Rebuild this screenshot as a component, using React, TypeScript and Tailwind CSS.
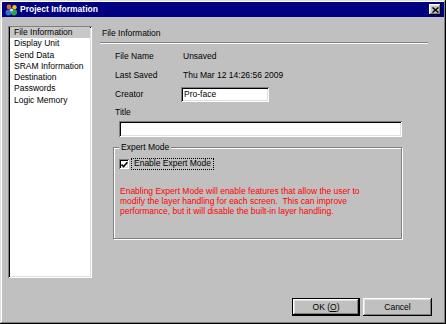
import React from "react";

const raised =
  "shadow-[inset_-1px_-1px_#000,inset_1px_1px_#fff,inset_-2px_-2px_#808080,inset_2px_2px_#dfdfdf]";
const sunken =
  "shadow-[inset_1px_1px_#808080,inset_-1px_-1px_#fff,inset_2px_2px_#000,inset_-2px_-2px_#dfdfdf]";

function AppIcon() {
  return (
    <svg width="13" height="12" viewBox="0 0 13 12">
      <circle cx="4" cy="3" r="2.4" fill="#e8641e" />
      <circle cx="9.5" cy="3.2" r="2.2" fill="#f4c020" />
      <circle cx="3.5" cy="8.5" r="3" fill="#2f6fd8" />
      <circle cx="9" cy="8.3" r="3.1" fill="#2aa845" />
      <circle cx="6.5" cy="6" r="1.6" fill="#c8e8ff" />
    </svg>
  );
}

export default function App() {
  const items = [
    "File Information",
    "Display Unit",
    "Send Data",
    "SRAM Information",
    "Destination",
    "Passwords",
    "Logic Memory",
  ];
  return (
    <div
      className={`w-[446px] h-[324px] bg-[#c0c0c0] p-[2px] flex flex-col text-[8.5px] leading-[11px] text-black font-['Liberation_Sans',Arial,sans-serif] shadow-[inset_-1px_-1px_#000,inset_1px_1px_#dfdfdf,inset_-2px_-2px_#808080,inset_2px_2px_#fff]`}
    >
      {/* Title bar */}
      <div className="h-[15px] bg-[#000080] flex items-center pl-[3px] pr-[3px]">
        <AppIcon />
        <span className="ml-[2px] text-white font-bold text-[8.5px]">Project Information</span>
        <div className="flex-1" />
        <div className={`w-[12px] h-[11px] bg-[#c0c0c0] ${raised} flex items-center justify-center`}>
          <svg width="7" height="6" viewBox="0 0 7 6">
            <path d="M0.5 0.5 L6.5 5.5 M6.5 0.5 L0.5 5.5" stroke="#000" strokeWidth="1.4" />
          </svg>
        </div>
      </div>

      {/* Body */}
      <div className="flex pl-[6px] pt-[9px]">
        {/* List */}
        <div className={`w-[84px] h-[252px] bg-white ${sunken} p-[2px] pt-[1px]`}>
          {items.map((t, i) => (
            <div
              key={t}
              className={`h-[11.3px] leading-[11.3px] pl-[4px] whitespace-nowrap ${
                i === 0 ? "bg-[#c8c8c8]" : ""
              }`}
            >
              {t}
            </div>
          ))}
        </div>

        {/* Right panel */}
        <div className="ml-[8px] w-[328px] flex flex-col">
          <div className="mt-[2px] h-[11px] pl-[2px]">File Information</div>
          <div className="mt-[3px] h-[2px] border-t border-t-[#808080] border-b border-b-white" />

          <div className="pl-[15px] flex flex-col">
            <div className="mt-[7px] h-[11px] flex">
              <span className="w-[68px]">File Name</span>
              <span>Unsaved</span>
            </div>
            <div className="mt-[8px] h-[11px] flex">
              <span className="w-[68px]">Last Saved</span>
              <span>Thu Mar 12 14:26:56 2009</span>
            </div>
            <div className="mt-[6px] h-[15px] flex items-center">
              <span className="w-[66px]">Creator</span>
              <div className={`w-[88px] h-[15px] bg-white ${sunken} flex items-center pl-[3px]`}>
                Pro-face
              </div>
            </div>
            <div className="mt-[5px] h-[11px]">Title</div>
          </div>

          <div className={`mt-[3px] ml-[19px] w-[283px] h-[16px] bg-white ${sunken}`} />

          {/* Group box */}
          <div className="mt-[10px] ml-[13px] w-[289px] h-[92px] relative border border-[#808080] shadow-[inset_1px_1px_#fff,1px_1px_#fff]">
            <span className="absolute top-[-6px] left-[5px] px-[2px] bg-[#c0c0c0] leading-[11px]">
              Expert Mode
            </span>
            <div className="pt-[11px] pl-[5px] flex items-center">
              <div className={`w-[10px] h-[10px] bg-white ${sunken} flex items-center justify-center`}>
                <svg width="7" height="7" viewBox="0 0 7 7">
                  <path d="M0.5 3.5 L2.6 5.6 L6.5 1.2" stroke="#000" strokeWidth="1.6" fill="none" />
                </svg>
              </div>
              <span className="ml-[3px] px-[2px] h-[10px] leading-[9px] outline outline-1 outline-dotted outline-[#000]">
                Enable Expert Mode
              </span>
            </div>
            <div className="mt-[17px] pl-[6px] leading-[10px] text-[#ff0000] whitespace-nowrap">
              Enabling Expert Mode will enable features that allow the user to
              <br />
              modify the layer handling for each screen.&nbsp; This can improve
              <br />
              performance, but it will disable the built-in layer handling.
            </div>
          </div>
        </div>
      </div>

      {/* Buttons */}
      <div className="flex justify-end gap-[3px] mt-[20px] pr-[12px]">
        <div className="w-[68px] h-[18px] border border-black">
          <div className={`w-full h-full bg-[#c0c0c0] ${raised} flex items-center justify-center`}>
            <span>
              OK (<span className="underline">O</span>)
            </span>
          </div>
        </div>
        <div className={`w-[69px] h-[18px] bg-[#c0c0c0] ${raised} flex items-center justify-center`}>
          Cancel
        </div>
      </div>
    </div>
  );
}
